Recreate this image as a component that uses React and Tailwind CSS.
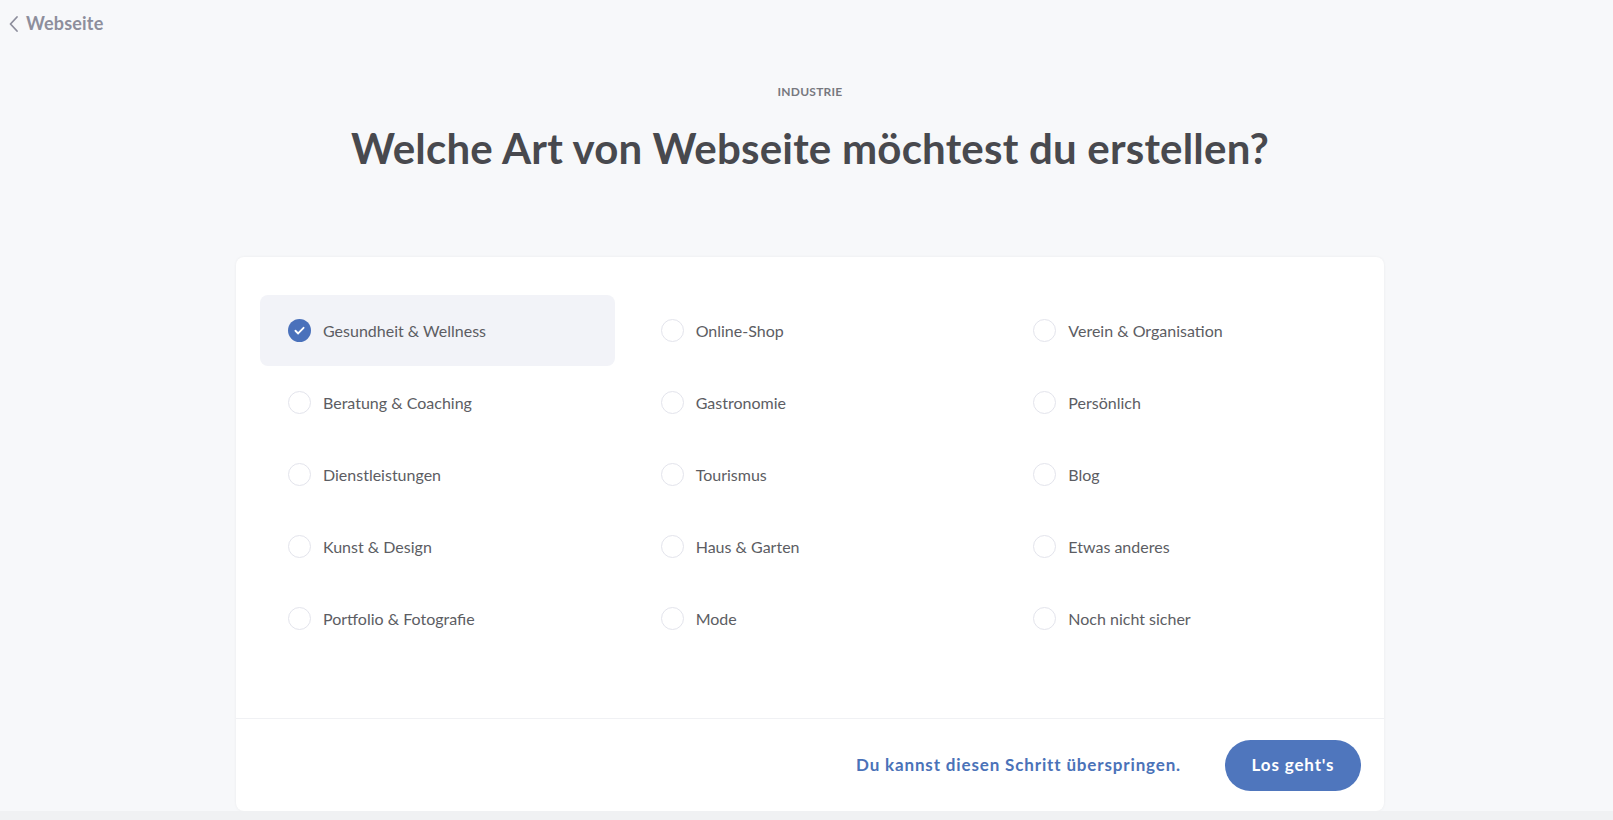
import React, { useState } from 'react'

const options = [
  'Gesundheit & Wellness', 'Online-Shop', 'Verein & Organisation',
  'Beratung & Coaching', 'Gastronomie', 'Persönlich',
  'Dienstleistungen', 'Tourismus', 'Blog',
  'Kunst & Design', 'Haus & Garten', 'Etwas anderes',
  'Portfolio & Fotografie', 'Mode', 'Noch nicht sicher',
]

const Radio = ({ checked }) =>
  checked ? (
    <span className="flex h-[23px] w-[23px] items-center justify-center rounded-full bg-[#4a71bb]">
      <svg width="13" height="13" viewBox="0 0 24 24" fill="none" stroke="white" strokeWidth="3.4" strokeLinecap="round" strokeLinejoin="round">
        <path d="M4.5 12.5l5 5L19.5 7" />
      </svg>
    </span>
  ) : (
    <span className="h-[23px] w-[23px] rounded-full border-[1.5px] border-[#e3e4ec] bg-white" />
  )

export default function App() {
  const [selected, setSelected] = useState(0)

  return (
    <div className="flex h-[820px] flex-col bg-[#f7f8fa] font-['Lato',sans-serif]">
      <div className="flex h-[47px] items-center pl-[8px]">
        <button className="flex items-center gap-[6px] text-[18px] font-bold tracking-[0.01em] text-[#8d8e9c]">
          <svg width="12" height="18" viewBox="0 0 12 18" fill="none" stroke="#8d8e9c" strokeWidth="1.8" strokeLinecap="round" strokeLinejoin="round">
            <path d="M9 2L2.5 9L9 16" />
          </svg>
          Webseite
        </button>
      </div>

      <div className="flex flex-col items-center pl-[7px]">
        <p className="mt-[36px] text-[12px] font-bold tracking-[0.02em] text-[#77787f]">INDUSTRIE</p>
        <h1 className="mt-[16px] text-[42px] font-bold tracking-[0.005em] text-[#48494e]">
          Welche Art von Webseite möchtest du erstellen?
        </h1>
      </div>

      <div className="flex justify-center pl-[7px]">
        <div className="mt-[77px] w-[1148px] rounded-[8px] bg-white shadow-[0_0_3px_rgba(0,0,0,0.06)]">
          <div className="grid grid-cols-3 gap-x-[18px] gap-y-[1px] px-[24px] pb-[64px] pt-[38px]">
            {options.map((label, i) => (
              <button
                key={label}
                onClick={() => setSelected(i)}
                className={`flex h-[71px] items-center gap-[12px] rounded-[8px] pl-[28px] text-left ${
                  selected === i ? 'bg-[#f2f3f8]' : ''
                }`}
              >
                <Radio checked={selected === i} />
                <span className="text-[16px] text-[#5c5d63]">{label}</span>
              </button>
            ))}
          </div>

          <div className="flex h-[93px] items-center justify-end gap-[44px] border-t border-[#f0f1f4] pr-[23px]">
            <a href="#" className="text-[17px] font-bold tracking-[0.05em] text-[#4a72b8]">
              Du kannst diesen Schritt überspringen.
            </a>
            <button className="h-[51px] w-[136px] rounded-full bg-[#4f76bd] text-[17px] font-bold tracking-[0.05em] text-white">
              Los geht's
            </button>
          </div>
        </div>
      </div>
      <div className="flex-1 bg-[#f0f1f3]" />
    </div>
  )
}
